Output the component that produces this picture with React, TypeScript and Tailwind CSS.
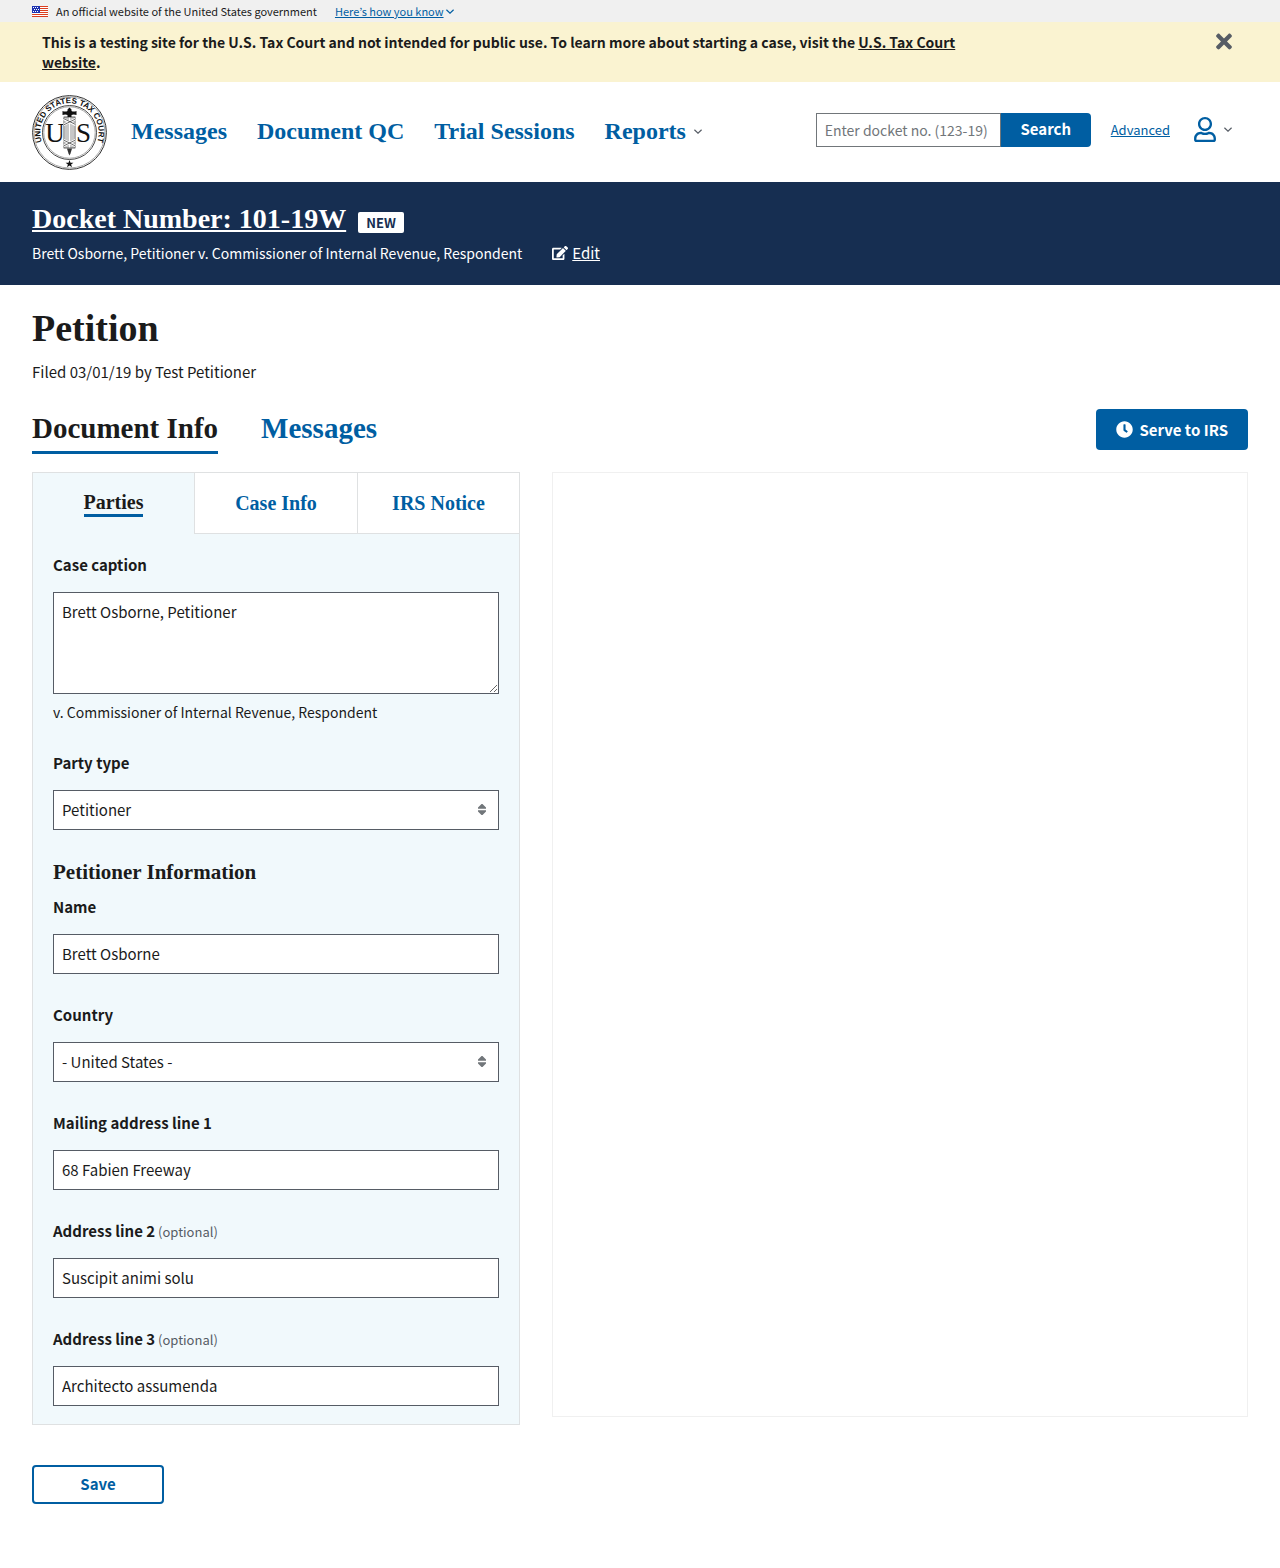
import type { ReactNode } from 'react';
import { FaClock, FaEdit, FaRegUser, FaTimes } from 'react-icons/fa';

const serif = "font-['Source_Serif_Pro','Liberation_Serif',serif] font-bold";

function Chevron({ className }: { className: string }) {
  return (
    <svg viewBox="0 0 10 6" className={className} fill="none" stroke="currentColor" strokeWidth="1.5" aria-hidden="true">
      <path d="M0.500 0.800l4.500 4.200 4.500-4.200" />
    </svg>
  );
}

function Flag() {
  return (
    <svg viewBox="0 0 16 11" className="h-[11px] w-4 shrink-0" aria-hidden="true" shapeRendering="crispEdges">
      <rect width="16" height="11" fill="#fff" />
      {[0, 2, 4, 6, 8, 10].map((y) => (
        <rect key={y} y={y} width="16" height="1" fill="#db3e1f" />
      ))}
      <rect width="8" height="7" fill="#1e33b1" />
      {[
        [1, 1], [3, 1], [5, 1], [2, 3], [4, 3], [6, 3], [1, 5], [3, 5], [5, 5],
      ].map(([x, y]) => (
        <rect key={`${x}-${y}`} x={x} y={y} width="1" height="1" fill="#fff" />
      ))}
    </svg>
  );
}

function Seal() {
  return (
    <svg viewBox="0 0 75 75" className="size-[75px]" role="img" aria-label="United States Tax Court seal">
      <defs>
        <path id="seal-arc" d="M13.600 54.200A29.200 29.200 0 1 1 61.400 54.200" />
      </defs>
      <g fill="none" stroke="#333">
        <circle cx="37.5" cy="37.5" r="36.9" strokeWidth="1" />
        <circle cx="37.5" cy="37.5" r="35.500" strokeWidth="0.4" />
        <circle cx="37.5" cy="37.5" r="27" strokeWidth="0.9" />
        <circle cx="37.5" cy="37.5" r="25.700" strokeWidth="0.4" />
      </g>
      <text className="font-['Liberation_Sans',sans-serif] text-[8px] font-bold" fill="#111">
        <textPath href="#seal-arc" startOffset="50%" textAnchor="middle">UNITED  STATES  TAX  COURT</textPath>
      </text>
      <g className="font-['Liberation_Serif',serif] text-[27px]" fill="#111" textAnchor="middle">
        <text x="23" y="47">U</text>
        <text x="51.5" y="47">S</text>
      </g>
      <rect x="32" y="22" width="11" height="31" fill="#fff" stroke="#222" strokeWidth="0.7" />
      <path d="M34 22v31M36 22v31M39 22v31M41 22v31" stroke="#444" strokeWidth="0.6" />
      <path d="M31.500 24l12 6M31.500 30l12-6M31.500 45l12 6M31.500 51l12-6" stroke="#fff" strokeWidth="2.200" />
      <path d="M31.500 23.500l12 6M31.500 30l12-6M31.500 45l12 6M31.500 51l12-6" stroke="#333" strokeWidth="0.7" />
      <path d="M30.500 16q3 1 5 0v-1.500l2-2 2 2v1.500q2 1 5 0v4q-3-1-5 0v2h-4v-2q-2-1-5 0z" fill="#111" />
      <path d="M35 53.500h5l-1.500 5-1 2-1-2z" fill="#333" />
      <path d="M37.500 65l1 2.700h2.900l-2.300 1.700.9 2.800-2.500-1.700-2.500 1.700.9-2.800-2.300-1.700h2.900z" fill="#111" />
    </svg>
  );
}

function SortArrows() {
  return (
    <svg viewBox="0 0 10 12" className="pointer-events-none absolute top-[13px] right-3 h-3 w-[10px]" fill="#71767a" aria-hidden="true">
      <path d="M4.500 1h1l3.500 3.500v1.200h-8v-1.200zM4.500 12h1l3.500-3.500v-1.200h-8v1.200z" />
    </svg>
  );
}

const control = 'block h-10 w-full rounded-none border border-[#565c65] bg-white px-2 text-[15px]';

function Field({ id, label, optional, children }: { id: string; label: string; optional?: boolean; children: ReactNode }) {
  return (
    <div>
      <label htmlFor={id} className="mb-[14px] block text-[15px] leading-[26px] font-bold">
        {label}
        {optional && <span className="text-[13px] leading-4 font-normal text-[#565c65]"> (optional)</span>}
      </label>
      {children}
    </div>
  );
}

function TextField({ id, label, value, optional }: { id: string; label: string; value: string; optional?: boolean }) {
  return (
    <Field id={id} label={label} optional={optional}>
      <input id={id} type="text" defaultValue={value} className={`${control} pb-0.5`} />
    </Field>
  );
}

function SelectField({ id, label, value }: { id: string; label: string; value: string }) {
  return (
    <Field id={id} label={label}>
      <div className="relative">
        <select id={id} className={`${control} appearance-none`}>
          <option>{value}</option>
        </select>
        <SortArrows />
      </div>
    </Field>
  );
}

export default function App() {
  return (
    <div className="bg-white pb-16 font-['Source_Sans_Pro','Noto_Sans_CJK_KR',sans-serif] text-[15px] leading-6 text-[#1b1b1b]">
      <section className="flex items-center bg-[#f0f0f0] px-8 text-[11px] leading-[22px]">
        <Flag />
        <span className="ml-2">An official website of the United States government</span>
        <button className="ml-[18px] flex items-center text-[#005ea2]">
          <span className="underline">Here’s how you know</span>
          <Chevron className="ml-0.5 h-[5px] w-2" />
        </button>
      </section>

      <section className="flex items-start justify-between bg-[#faf3d1] pt-2 pr-12 pb-[10px] pl-[42px]">
        <p className="max-w-[960px] pt-0.5 text-[14px] leading-5 font-bold">
          This is a testing site for the U.S. Tax Court and not intended for public use. To learn more about starting a case, visit the{' '}
          <a href="#" className="underline">U.S. Tax Court website</a>.
        </p>
        <button aria-label="Close" className="text-[#565c65]">
          <FaTimes className="h-[23px] w-4" />
        </button>
      </section>

      <header className="flex min-h-[100px] flex-wrap items-center justify-between gap-4 pr-12 pl-8">
        <div className="flex items-center gap-6">
          <Seal />
          <nav className={`${serif} flex gap-[30px] pb-0.5 text-[24px] leading-8 text-[#005ea2]`}>
            <a href="#">Messages</a>
            <a href="#">Document QC</a>
            <a href="#">Trial Sessions</a>
            <button className="flex items-center">
              Reports
              <Chevron className="ml-2 h-[5px] w-2 text-[#565c65]" />
            </button>
          </nav>
        </div>
        <div className="flex items-center pb-[5px]">
          <form className="flex">
            <input
              type="text"
              aria-label="Docket number"
              placeholder="Enter docket no. (123-19)"
              className="h-[34px] w-[185px] border border-[#71767a] px-2 text-[14px] placeholder:text-[#71767a]"
            />
            <button type="button" className="h-[34px] w-[90px] rounded-r bg-[#005ea2] pb-0.5 text-[15px] font-bold text-white">Search</button>
          </form>
          <a href="#" className="ml-5 text-[13px] text-[#005ea2] underline">Advanced</a>
          <button aria-label="My account" className="ml-6 flex items-center">
            <FaRegUser className="h-[25px] w-[22px] text-[#005ea2]" />
            <Chevron className="ml-2 h-[5px] w-2 text-[#565c65]" />
          </button>
        </div>
      </header>

      <section className="bg-[#162e51] px-8 pt-5 pb-[19px] text-white">
        <div className="flex items-end">
          <h1 className={`${serif} text-[28px] leading-[34px]`}>
            <a href="#" className="underline">Docket Number: 101-19W</a>
          </h1>
          <span className="mb-[3px] ml-3 rounded-xs bg-white px-2 text-[13px] leading-[21px] font-bold text-[#162e51]">NEW</span>
        </div>
        <div className="mt-1 flex items-center leading-[26px]">
          <p className="text-[14px]">Brett Osborne, Petitioner v. Commissioner of Internal Revenue, Respondent</p>
          <a href="#" className="ml-[30px] flex items-center gap-1">
            <FaEdit className="size-4" />
            <span className="underline">Edit</span>
          </a>
        </div>
      </section>

      <main className="px-8 pt-[21px]">
        <h2 className={`${serif} text-[38px] leading-[44px]`}>Petition</h2>
        <p className="mt-[10px]">Filed 03/01/19 by Test Petitioner</p>

        <div className="mt-[25px] flex items-start justify-between">
          <div role="tablist" className={`${serif} flex gap-[43px] text-[29px] leading-[34px]`}>
            <button role="tab" aria-selected="true" className="border-b-3 border-[#005ea2] pt-0.5 pb-[6px]">Document Info</button>
            <button role="tab" aria-selected="false" className="border-b-3 border-transparent pt-0.5 pb-[6px] text-[#005ea2]">Messages</button>
          </div>
          <button className="flex h-[41px] items-center gap-[6px] rounded bg-[#005ea2] px-5 font-bold text-white">
            <FaClock className="size-[17px]" />
            Serve to IRS
          </button>
        </div>

        <div className="mt-[18px] grid grid-cols-12 items-start gap-8">
          <div className="col-span-5 border border-[#dfe1e2] bg-[#f1f9fc]">
            <div role="tablist" className={`${serif} grid h-[61px] grid-cols-3 text-[20px] text-[#005ea2]`}>
              <button role="tab" aria-selected="true" className="border-r border-[#dfe1e2] text-[#1b1b1b]">
                <span className="inline-block border-b-3 border-[#005ea2] leading-6">Parties</span>
              </button>
              <button role="tab" aria-selected="false" className="border-b border-[#dfe1e2] bg-white">Case Info</button>
              <button role="tab" aria-selected="false" className="border-b border-l border-[#dfe1e2] bg-white">IRS Notice</button>
            </div>

            <form className="flex flex-col gap-7 px-5 py-[18px]">
              <Field id="case-caption" label="Case caption">
                <textarea
                  id="case-caption"
                  defaultValue="Brett Osborne, Petitioner"
                  className="block h-[102px] w-full border border-[#565c65] bg-white px-2 py-[7px] text-[15px] leading-6"
                />
                <p className="mt-2 text-[14px] leading-5">v. Commissioner of Internal Revenue, Respondent</p>
              </Field>
              <SelectField id="party-type" label="Party type" value="Petitioner" />
              <div>
                <h3 className={`${serif} mb-2 text-[21px] leading-7`}>Petitioner Information</h3>
                <TextField id="name" label="Name" value="Brett Osborne" />
              </div>
              <SelectField id="country" label="Country" value="- United States -" />
              <TextField id="address1" label="Mailing address line 1" value="68 Fabien Freeway" />
              <TextField id="address2" label="Address line 2" value="Suscipit animi solu" optional />
              <TextField id="address3" label="Address line 3" value="Architecto assumenda" optional />
            </form>
          </div>
          <div className="col-span-7 h-[945px] border border-[#f0f0f0]" />
        </div>

        <button className="mt-10 h-[39px] w-[132px] rounded border-2 border-[#005ea2] pb-0.5 font-bold text-[#005ea2]">Save</button>
      </main>
    </div>
  );
}
